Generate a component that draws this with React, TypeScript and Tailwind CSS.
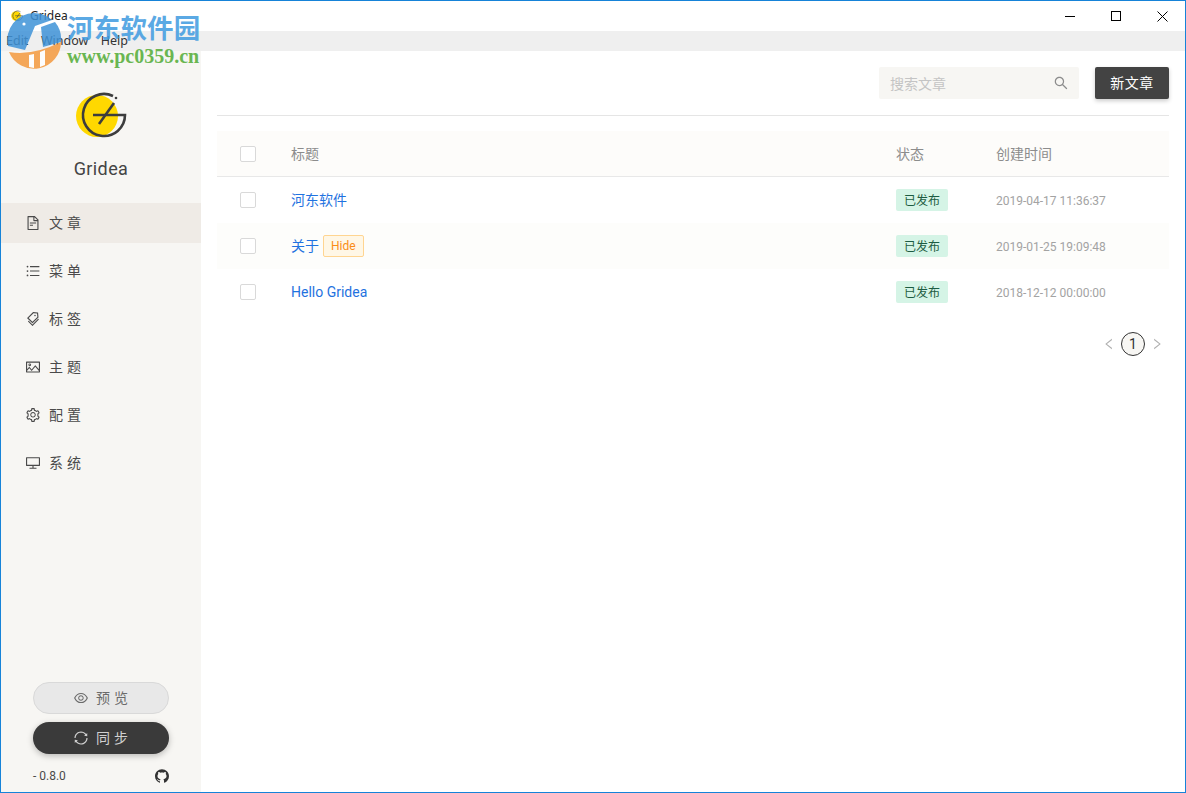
import {
  AiOutlineBars,
  AiOutlineDesktop,
  AiOutlineEye,
  AiOutlineFileText,
  AiOutlineLeft,
  AiOutlinePicture,
  AiOutlineRight,
  AiOutlineSearch,
  AiOutlineSetting,
  AiOutlineSync,
  AiOutlineTags,
  AiFillGithub,
} from "react-icons/ai";

const MENU = [
  { label: "文章", icon: AiOutlineFileText },
  { label: "菜单", icon: AiOutlineBars },
  { label: "标签", icon: AiOutlineTags },
  { label: "主题", icon: AiOutlinePicture },
  { label: "配置", icon: AiOutlineSetting },
  { label: "系统", icon: AiOutlineDesktop },
];

const POSTS = [
  { title: "河东软件", date: "2019-04-17 11:36:37" },
  { title: "关于", date: "2019-01-25 19:09:48", hide: true },
  { title: "Hello Gridea", date: "2018-12-12 00:00:00" },
];

const FONT = "font-['Roboto','Noto_Sans_CJK_SC',sans-serif]";

function GrideaLogo({ size }: { size: number }) {
  return (
    <svg width={size} height={size} viewBox="0 0 52 52" fill="none">
      <circle cx="22" cy="26" r="21" fill="#ffd800" />
      <path d="M38 6 A21 21 0 1 0 50 25 H18" stroke="#3d3d3d" strokeWidth="2.6" />
      <path d="M39 13 L24 34" stroke="#3d3d3d" strokeWidth="2.6" />
      <circle cx="41" cy="8" r="1.3" fill="#3d3d3d" />
    </svg>
  );
}

function Checkbox() {
  return <div className="w-4 h-4 rounded-[2px] border border-[#d9d9d9] bg-white" />;
}

function Watermark() {
  return (
    <div className="absolute left-[4px] top-[10px] flex pointer-events-none">
      <svg width="58" height="58" viewBox="0 0 58 58" className="mt-[1px] opacity-85">
        <path d="M3 34 A27 27 0 0 1 29 1 A27 27 0 0 1 47 8 L30 14 L20 38 Z" fill="#3f93d8" />
        <path d="M36 15 L50 10 A27 27 0 0 1 56 30 L38 35 Z" fill="#3f93d8" />
        <circle cx="19" cy="12" r="1.6" fill="#fff" />
        <path d="M4 40 Q28 44 56 30 A27 27 0 0 1 4 40 Z" fill="#f49a3f" />
        <path d="M24 43 L29 42 L29 56 L24 55 Z M35 40 L40 38 L40 53 L35 55 Z" fill="#fff" />
      </svg>
      <div className="flex flex-col ml-[4px] font-bold">
        <div className="text-[26.5px] leading-[32px] tracking-[0.2px] text-[#3f9be0] opacity-85 font-['Noto_Sans_CJK_SC',serif]">河东软件园</div>
        <div className="text-[20px] leading-[22px] text-[#6ab651] mt-[2px] font-['Liberation_Serif',serif]">www.pc0359.cn</div>
      </div>
    </div>
  );
}

export default function App() {
  return (
    <div className={`relative w-full h-[793px] flex flex-col border border-[#1683d8] bg-white overflow-hidden ${FONT}`}>
      {/* title bar */}
      <div className="h-[30px] flex items-center justify-between shrink-0">
        <div className="flex items-center pl-[10px]">
          <GrideaLogo size={12} />
          <span className="ml-[7px] text-[12px] text-[#222] font-['Noto_Sans','Noto_Sans_CJK_SC',sans-serif]">Gridea</span>
        </div>
        <div className="flex items-center">
          <div className="w-[46px] flex justify-center"><div className="w-[10px] h-px bg-black" /></div>
          <div className="w-[46px] flex justify-center"><div className="w-[10px] h-[10px] border border-black" /></div>
          <div className="w-[46px] flex justify-center">
            <svg width="11" height="11" viewBox="0 0 11 11" stroke="#000" strokeWidth="1"><path d="M0.5 0.5 L10.5 10.5 M10.5 0.5 L0.5 10.5" /></svg>
          </div>
        </div>
      </div>
      {/* app menu */}
      <div className="h-[20px] bg-[#efefef] shrink-0 flex items-center pl-[5px] gap-[12.5px] text-[12.5px] text-[#333] font-['Noto_Sans',sans-serif]">
        <span>Edit</span>
        <span>Window</span>
        <span>Help</span>
      </div>

      <div className="flex-1 flex min-h-0">
        {/* sidebar */}
        <div className="w-[200px] shrink-0 bg-[#f7f6f3] flex flex-col justify-between">
          <div>
            <div className="flex justify-center pt-[39px]"><GrideaLogo size={52} /></div>
            <div className="text-center text-[18px] leading-[24px] mt-[15px] text-[#444] tracking-[0.4px]">Gridea</div>
            <div className="mt-[22px]">
              {MENU.map((m, i) => {
                const Icon = m.icon;
                return (
                  <div key={m.label} className={`h-[40px] mb-[8px] flex items-center pl-[24px] text-[14px] text-[#4a4a4a] ${i === 0 ? "bg-[#efebe6]" : ""}`}>
                    <Icon size={16} className="text-[#4a4a4a]" />
                    <span className="ml-[8px] tracking-[4px]">{m.label}</span>
                  </div>
                );
              })}
            </div>
          </div>
          <div className="px-[32px] pb-[7px]">
            <div className="h-[32px] pl-[3px] rounded-full bg-[#e8e8e8] border border-[#d9d9d9] flex items-center justify-center text-[14px] text-[#6b6b6b]">
              <AiOutlineEye size={16} />
              <span className="ml-[7px] tracking-[4px]">预览</span>
            </div>
            <div className="h-[32px] pl-[3px] mt-[8px] rounded-full bg-[#3a3a3a] shadow-[0_2px_6px_rgba(0,0,0,0.25)] flex items-center justify-center text-[14px] text-[#d0d0d0]">
              <AiOutlineSync size={16} />
              <span className="ml-[7px] tracking-[4px]">同步</span>
            </div>
            <div className="flex items-center justify-between mt-[13px] h-[18px] text-[12px] text-[#4a4a4a]">
              <span>- 0.8.0</span>
              <AiFillGithub size={16} className="text-[#333] -mr-[1px]" />
            </div>
          </div>
        </div>

        {/* main */}
        <div className="flex-1 px-[16px]">
          <div className="h-[65px] border-b border-[#e5e5e5] flex justify-end pt-[16px] gap-[16px]">
            <div className="w-[200px] h-[32px] bg-[#f7f6f3] rounded-[2px] flex items-center justify-between pl-[11px] pr-[10px] text-[14px] text-[#c4c4c4]">
              <span className="pt-[2px]">搜索文章</span>
              <AiOutlineSearch size={16} className="text-[#8c8c8c]" />
            </div>
            <div className="w-[74px] h-[32px] bg-[#434343] rounded-[2px] shadow-[0_2px_4px_rgba(0,0,0,0.2)] flex items-center justify-center text-[14px] text-white tracking-[0.5px]">新文章</div>
          </div>

          <div className="mt-[15px] h-[46px] bg-[#fdfcfa] border-b border-[#e8e8e8] flex items-center text-[14px] text-[#8c8c8c]">
            <div className="w-[74px] pl-[23px]"><Checkbox /></div>
            <div className="w-[605px] pt-[2px]">标题</div>
            <div className="w-[100px] pt-[2px]">状态</div>
            <div className="pt-[2px]">创建时间</div>
          </div>

          {POSTS.map((p, i) => (
            <div key={p.date} className={`h-[46px] flex items-center ${i === 1 ? "bg-[#fdfdfb]" : ""}`}>
              <div className="w-[74px] pl-[23px]"><Checkbox /></div>
              <div className="w-[605px] flex items-center text-[14px] text-[#1f72e0]">
                {p.title}
                {p.hide && (
                  <span className="ml-[4px] h-[22px] px-[7px] flex items-center rounded-[2px] border border-[#ffd591] bg-[#fff7e6] text-[12px] text-[#fa8c16]">Hide</span>
                )}
              </div>
              <div className="w-[100px] flex">
                <span className="flex items-center justify-center w-[52px] h-[22px] pt-[2px] rounded-[2px] bg-[#d5f4e6] text-[12px] text-[#1d5c42]">已发布</span>
              </div>
              <div className="text-[12px] text-[#a3a3a3] pt-[1px]">{p.date}</div>
            </div>
          ))}

          <div className="flex justify-end items-center mt-[17px] pr-[5px]">
            <AiOutlineLeft size={14} className="text-[#b0b0b0]" />
            <div className="mx-[5px] w-[24px] h-[24px] rounded-full border border-[#333] bg-[#f7f6f3] flex items-center justify-center text-[14px] text-[#333]">1</div>
            <AiOutlineRight size={14} className="text-[#b0b0b0]" />
          </div>
        </div>
      </div>

      <Watermark />
    </div>
  );
}
